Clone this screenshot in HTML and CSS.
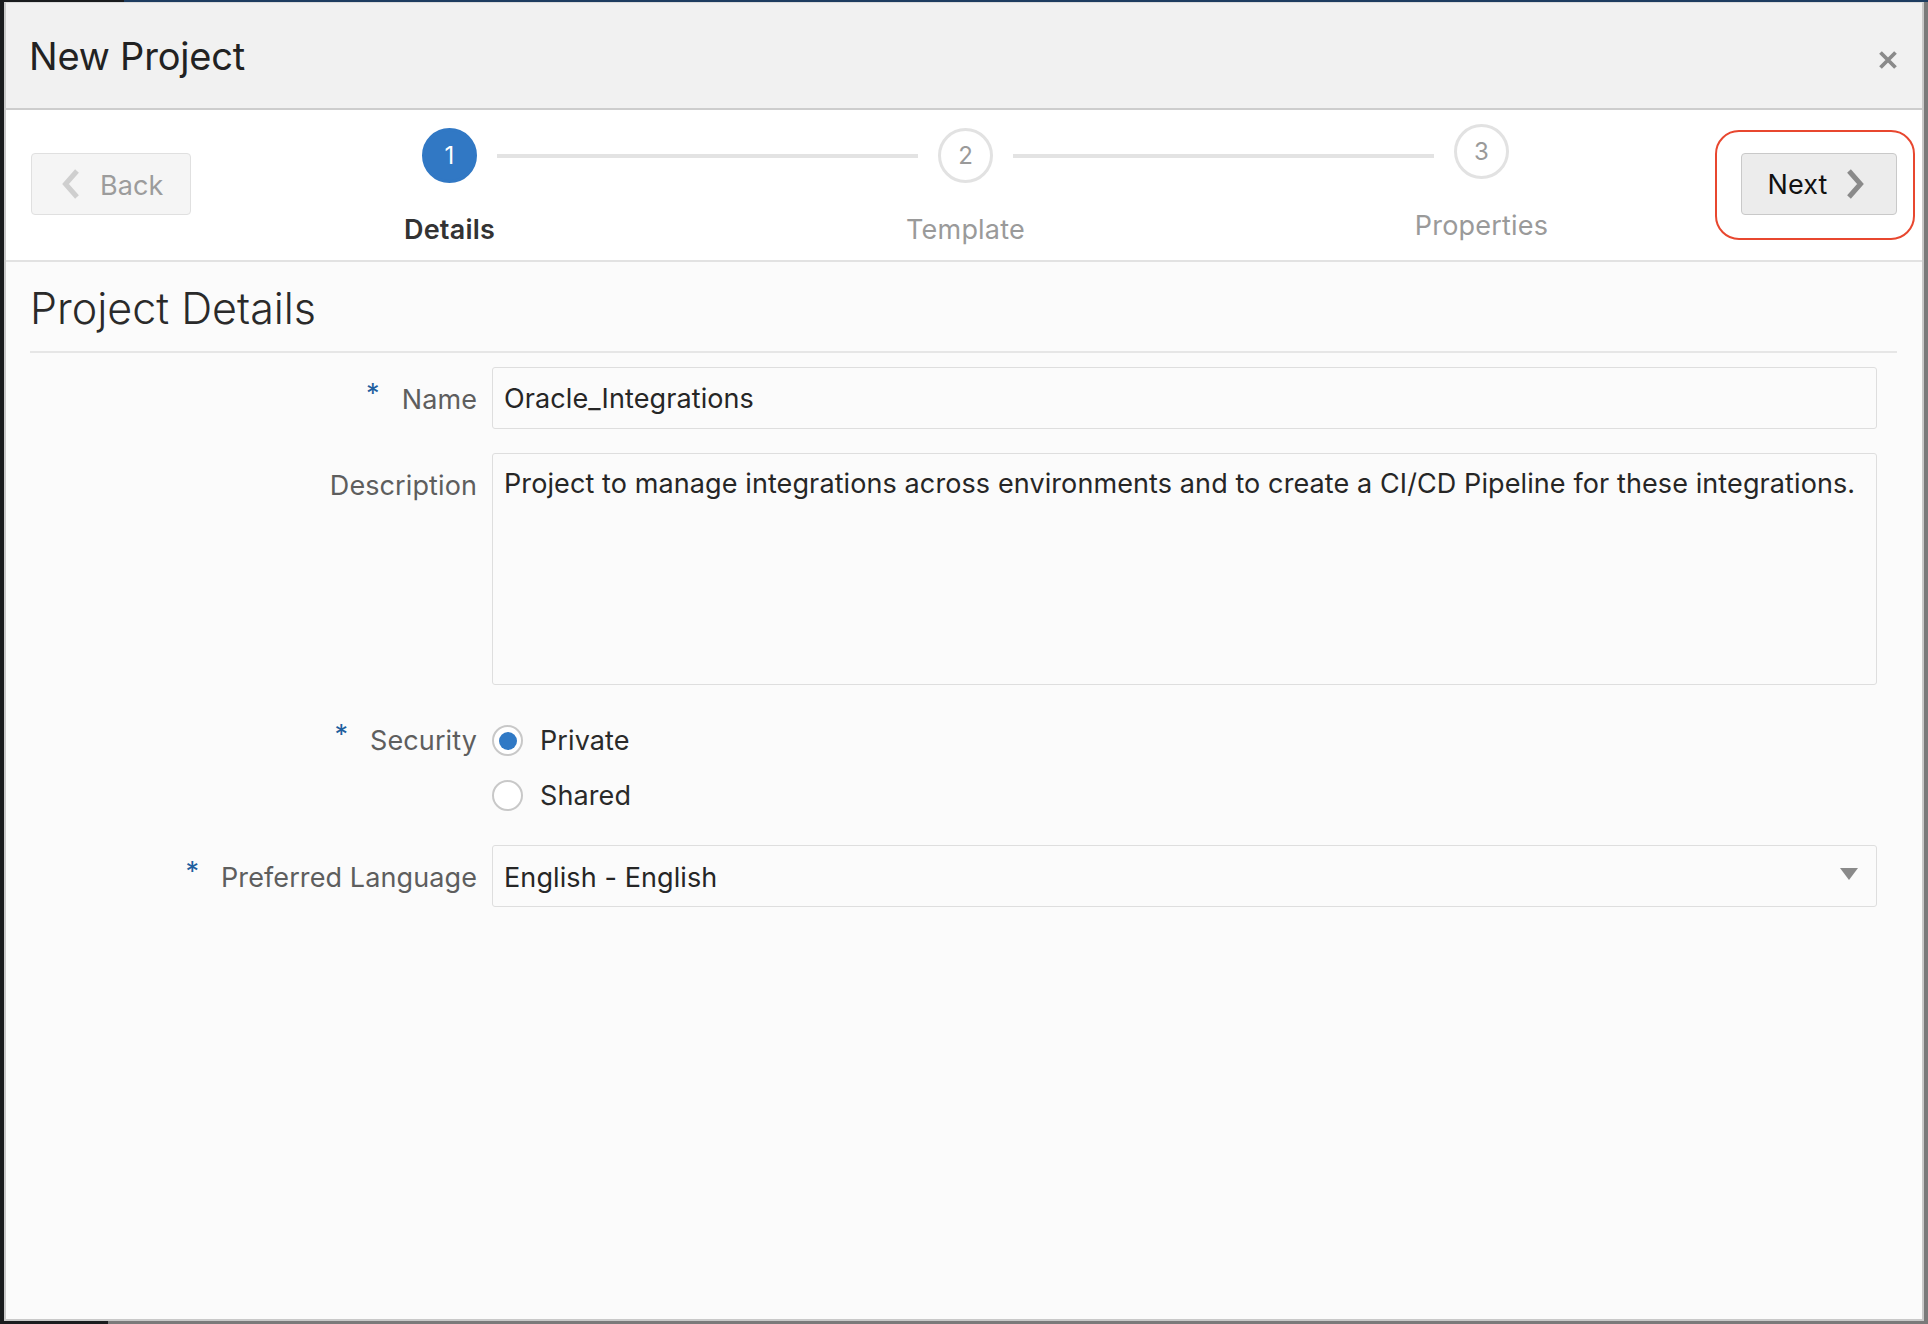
FILE: index.html
```html
<!DOCTYPE html>
<html lang="en">
<head>
<meta charset="utf-8">
<title>New Project</title>
<link rel="stylesheet" href="styles.css">
</head>
<body>
<div class="dialog">
  <header class="dlg-header">
    <h1 class="dlg-title">New Project</h1>
    <button class="close-btn" aria-label="Close">
      <svg width="20" height="20" viewBox="0 0 20 20"><path d="M2.5 2.5 L17.5 17.5 M17.5 2.5 L2.5 17.5" stroke="#8a8a8a" stroke-width="3.8" stroke-linecap="butt" fill="none"/></svg>
    </button>
  </header>

  <div class="train-bar">
    <button class="nav-btn back-btn" disabled>
      <svg class="chev" width="22" height="30" viewBox="0 0 22 30"><path d="M17 2 L5.5 15 L17 28" stroke="#cfcfcf" stroke-width="5" fill="none"/></svg>
      <span>Back</span>
    </button>

    <div class="train">
      <div class="stop stop-current">1</div>
      <div class="connector"></div>
      <div class="stop">2</div>
      <div class="connector"></div>
      <div class="stop stop-raised">3</div>
      <div class="stop-label label-current">Details</div>
      <div class="stop-label label-2">Template</div>
      <div class="stop-label label-3">Properties</div>
    </div>

    <div class="highlight">
      <button class="nav-btn next-btn">
        <span>Next</span>
        <svg class="chev" width="22" height="30" viewBox="0 0 22 30"><path d="M5 2 L16.5 15 L5 28" stroke="#8a8a8a" stroke-width="5" fill="none"/></svg>
      </button>
    </div>
  </div>

  <main class="content">
    <h2 class="section-title">Project Details</h2>
    <form class="form">
      <label class="flabel" for="name"><span class="req">*</span>Name</label>
      <input class="field" id="name" type="text" value="Oracle_Integrations">

      <label class="flabel" for="desc">Description</label>
      <textarea class="field area" id="desc">Project to manage integrations across environments and to create a CI/CD Pipeline for these integrations.</textarea>

      <div class="flabel flabel-radio"><span class="req">*</span>Security</div>
      <div class="radios">
        <label class="opt"><input type="radio" name="sec" checked><span>Private</span></label>
        <label class="opt"><input type="radio" name="sec"><span>Shared</span></label>
      </div>

      <label class="flabel flabel-last"><span class="req">*</span>Preferred Language</label>
      <div class="field select">
        <span>English - English</span>
        <svg width="18" height="12" viewBox="0 0 18 12"><path d="M0 0 H18 L9 12 Z" fill="#8a8a8a"/></svg>
      </div>
    </form>
  </main>
</div>
</body>
</html>
```

FILE: styles.css
```css
* { box-sizing: border-box; }
html, body { height: 100%; }
body {
  margin: 0;
  font-family: Inter, "Liberation Sans", sans-serif;
  background:
    linear-gradient(to right, #1a1c1e 0 124px, #1d3c60 124px) top / 100% 2px no-repeat,
    linear-gradient(to right, #1a1c1e 0 108px, #7a7a7a 108px) bottom / 100% 3px no-repeat,
    linear-gradient(#1a1c1e, #1a1c1e) left / 4px 100% no-repeat,
    #7a7a7a;
  padding: 2px 4px 3px 4px;
}
.dialog {
  height: 1319px;
  display: flex;
  flex-direction: column;
  border-left: 2px solid #c9c9c9;
  border-right: 2px solid #c9c9c9;
  border-bottom: 2px solid #c9c9c9;
  border-top: 1px solid #dcdcdc;
  background: #fbfbfb;
}
.dlg-header {
  height: 107px;
  flex: none;
  background: #f1f1f1;
  border-bottom: 2px solid #cdcdcd;
  display: flex;
  align-items: center;
  justify-content: space-between;
  padding: 0 24px 0 23px;
}
.dlg-title {
  margin: 0;
  font-size: 38px;
  font-weight: 400;
  color: #222;
  letter-spacing: -0.2px;
}
.close-btn {
  border: 0;
  background: none;
  padding: 0;
  width: 20px;
  height: 20px;
  display: flex;
  margin-top: 9px;
}
.train-bar {
  height: 152px;
  flex: none;
  background: #fff;
  border-bottom: 2px solid #e2e2e2;
  display: flex;
  align-items: center;
  padding-left: 25px;
}
.nav-btn {
  height: 62px;
  display: flex;
  align-items: center;
  font-family: inherit;
  font-size: 27px;
  letter-spacing: 0.1px;
  border-radius: 4px;
  padding: 2px 0 0 0;
  margin-bottom: 2px;
}
.back-btn {
  width: 160px;
  background: #f5f5f5;
  border: 1px solid #e0e0e0;
  color: #9c9c9c;
  padding-left: 28px;
  gap: 18px;
}
.next-btn {
  width: 156px;
  background: #ececec;
  border: 1px solid #c9c9c9;
  color: #111;
  padding-left: 26px;
  gap: 17px;
}
.chev { margin-top: -2px; }
.train {
  align-self: flex-start;
  margin-top: 18px;
  margin-left: 231px;
  display: grid;
  grid-template-columns: 55px 461px 55px 461px 55px;
  grid-template-rows: 55px auto;
  row-gap: 31px;
}
.stop {
  width: 55px;
  height: 55px;
  border-radius: 50%;
  border: 3px solid #e2e2e2;
  background: #fff;
  color: #9a9a9a;
  font-size: 24px;
  display: flex;
  align-items: center;
  justify-content: center;
  align-self: center;
}
.stop-current {
  background: #3178c4;
  border-color: #3178c4;
  color: #fff;
}
.stop-raised { margin-bottom: 8px; }
.connector {
  height: 4px;
  background: #e3e3e3;
  margin: 0 20px;
  align-self: center;
}
.stop-label {
  font-size: 27px;
  letter-spacing: 0.2px;
  line-height: 32px;
  color: #9a9a9a;
  justify-self: center;
  white-space: nowrap;
}
.label-current { grid-column: 1; color: #333; font-weight: 600; }
.label-2 { grid-column: 3; }
.label-3 { grid-column: 5; margin-top: -4px; }
.highlight {
  margin-left: auto;
  margin-right: 7px;
  width: 200px;
  height: 110px;
  border: 2.5px solid #e8472f;
  border-radius: 24px;
  padding: 20.5px 0 0 23.5px;
}
.content {
  flex: 1;
  background: #fbfbfb;
  padding: 0 25px 0 24px;
}
.section-title {
  margin: 20px 0 0 0;
  font-size: 43px;
  line-height: 52px;
  font-weight: 300;
  color: #2a2a2a;
  padding-bottom: 17px;
  border-bottom: 2px solid #e6e6e6;
}
.form {
  display: grid;
  grid-template-columns: 447px 1fr;
  column-gap: 15px;
  row-gap: 22px;
  margin-top: 14px;
  padding-right: 20px;
}
.flabel {
  font-size: 27px;
  letter-spacing: 0.1px;
  line-height: 62px;
  padding-top: 2px;
  color: #5e5e5e;
  text-align: right;
  white-space: nowrap;
}
.req {
  color: #1f5f9f;
  font-size: 27px;
  margin-right: 22px;
  position: relative;
  top: -6px;
}
.field {
  height: 62px;
  border: 1px solid #dedede;
  border-radius: 3px;
  background: #fbfbfb;
  font-family: inherit;
  font-size: 27px;
  letter-spacing: 0.1px;
  color: #262626;
  padding: 1px 11px 0 11px;
  width: 100%;
}
.area {
  height: 232px;
  resize: none;
  padding: 10px 11px 8px 11px;
  line-height: 40px;
  overflow: hidden;
  white-space: pre;
}
.flabel-radio {
  line-height: 55px;
  padding-top: 0;
  margin-top: 6px;
}
.radios {
  margin-top: 6px;
  display: flex;
  flex-direction: column;
}
.opt {
  height: 55px;
  display: flex;
  align-items: center;
  gap: 17px;
  font-size: 27px;
  letter-spacing: 0.1px;
  color: #2a2a2a;
}
.opt input {
  appearance: none;
  margin: 0;
  width: 31px;
  height: 31px;
  border-radius: 50%;
  border: 2px solid #c8c8c8;
  background: #fff;
  display: grid;
  place-items: center;
}
.opt input:checked::after {
  content: "";
  width: 18px;
  height: 18px;
  border-radius: 50%;
  background: #3079c5;
}
.select {
  display: flex;
  align-items: center;
  justify-content: space-between;
  padding: 3px 18px 0 11px;
}
.select svg { margin-top: -7px; }
```
